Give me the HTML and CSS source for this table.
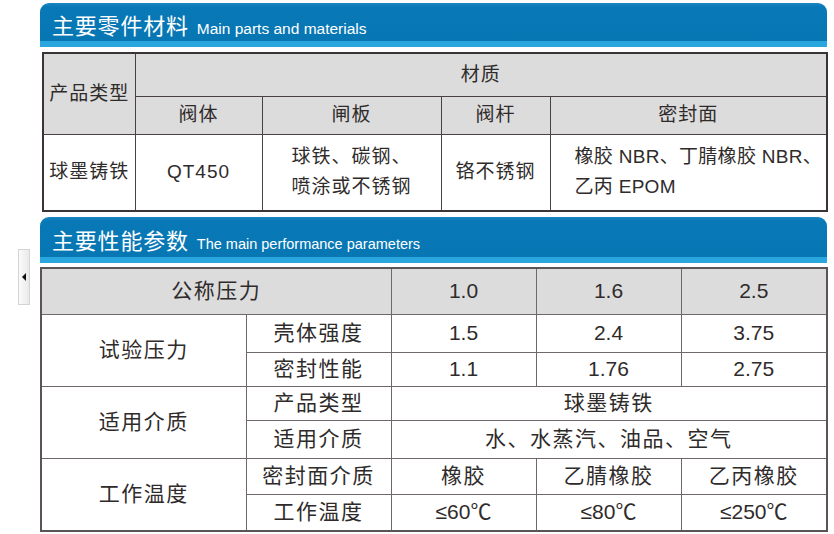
FILE: index.html
```html
<!DOCTYPE html>
<html lang="zh">
<head>
<meta charset="utf-8">
<link rel="stylesheet" href="styles.css">
</head>
<body>
<div class="side-tab"><span class="tri"></span></div>
<div class="page">
  <div class="bar">
    <span class="bar-cn">主要零件材料</span>
    <span class="bar-en">Main parts and materials</span>
  </div>
  <table class="t1">
    <colgroup>
      <col class="c1a"><col class="c1b"><col class="c1c"><col class="c1d"><col class="c1e">
    </colgroup>
    <tr class="r1a">
      <th rowspan="2" class="gray">产品类型</th>
      <th colspan="4" class="gray">材质</th>
    </tr>
    <tr class="r1b">
      <th class="gray">阀体</th>
      <th class="gray">闸板</th>
      <th class="gray">阀杆</th>
      <th class="gray">密封面</th>
    </tr>
    <tr class="r1c">
      <td>球墨铸铁</td>
      <td class="lat">QT450</td>
      <td class="two">球铁、碳钢、<br>喷涂或不锈钢</td>
      <td>铬不锈钢</td>
      <td class="two left">橡胶 NBR、丁腈橡胶 NBR、<br>乙丙 EPOM</td>
    </tr>
  </table>

  <div class="bar bar2">
    <span class="bar-cn">主要性能参数</span>
    <span class="bar-en">The main performance parameters</span>
  </div>
  <table class="t2">
    <colgroup>
      <col class="c2a"><col class="c2b"><col class="c2c"><col class="c2d"><col class="c2e">
    </colgroup>
    <tr class="h46">
      <th colspan="2" class="gray">公称压力</th>
      <th class="gray num">1.0</th>
      <th class="gray num">1.6</th>
      <th class="gray num">2.5</th>
    </tr>
    <tr class="h38">
      <td rowspan="2" class="grp">试验压力</td>
      <td>壳体强度</td>
      <td class="num">1.5</td>
      <td class="num">2.4</td>
      <td class="num">3.75</td>
    </tr>
    <tr class="h34">
      <td>密封性能</td>
      <td class="num">1.1</td>
      <td class="num">1.76</td>
      <td class="num">2.75</td>
    </tr>
    <tr class="h34 top-strong">
      <td rowspan="2" class="grp">适用介质</td>
      <td>产品类型</td>
      <td colspan="3">球墨铸铁</td>
    </tr>
    <tr class="h38">
      <td>适用介质</td>
      <td colspan="3">水、水蒸汽、油品、空气</td>
    </tr>
    <tr class="h36 top-strong">
      <td rowspan="2" class="grp">工作温度</td>
      <td>密封面介质</td>
      <td>橡胶</td>
      <td>乙腈橡胶</td>
      <td>乙丙橡胶</td>
    </tr>
    <tr class="h37">
      <td>工作温度</td>
      <td class="num">≤60℃</td>
      <td class="num">≤80℃</td>
      <td class="num">≤250℃</td>
    </tr>
  </table>
</div>
</body>
</html>
```

FILE: styles.css
```css
html, body {
  margin: 0;
  padding: 0;
  background: #ffffff;
}
body {
  font-family: "Liberation Sans", "Noto Sans CJK SC", sans-serif;
  color: #2f2b2b;
  width: 834px;
  height: 534px;
  overflow: hidden;
  position: relative;
}
.page {
  padding: 3px 0 0 40px;
  width: 787px;
}
.bar {
  height: 38px;
  border-radius: 9px 9px 0 0;
  background: linear-gradient(#1a86c2 0, #0878b6 4px, #0777b4 100%);
  border-bottom: 6px solid #2aa6df;
  display: flex;
  align-items: baseline;
  padding-left: 12px;
  color: #ffffff;
  box-sizing: border-box;
  height: 44px;
  padding-top: 8px;
}
.bar-cn {
  font-family: "Noto Sans CJK SC", sans-serif;
  font-size: 22px;
  letter-spacing: 0.8px;
  line-height: 26px;
}
.bar-en {
  font-family: "Liberation Sans", Arial, sans-serif;
  font-size: 15.5px;
  margin-left: 8px;
}
.bar2 {
  margin-top: 5px;
  height: 46px;
  padding-top: 9px;
}
.bar2 .bar-en {
  font-size: 14.5px;
}
table {
  border-collapse: collapse;
  table-layout: fixed;
}
th, td {
  padding: 0;
  text-align: center;
  vertical-align: middle;
  font-weight: normal;
  white-space: nowrap;
}
.t1 {
  margin: 5px 0 0 2px;
  width: 784px;
  border: 2px solid #3b3434;
}
.t1 th, .t1 td {
  border: 1px solid #4a4242;
  font-size: 19px;
  line-height: 24px;
  letter-spacing: 1px;
}
.t1 .c1a { width: 92px; }
.t1 .c1b { width: 127px; }
.t1 .c1c { width: 179px; }
.t1 .c1d { width: 109px; }
.t1 .c1e { width: 277px; }
.t1 .r1a { height: 43px; }
.t1 .r1b { height: 38px; }
.t1 .r1c { height: 77px; }
.t1 .r1c td { border-bottom: 2px solid #3b3434; }
.gray { background: #dcdcdc; }
.lat, .num {
  letter-spacing: 0;
}
.t1 .lat { font-size: 19px; }
.t1 .two { line-height: 30px; }
.t1 .left {
  text-align: left;
  padding-left: 24px;
  letter-spacing: 0.3px;
}
.t2 {
  margin-top: 4px;
  width: 786px;
  border: 2px solid #5a5454;
}
.t2 th, .t2 td {
  border: 1px solid #6e6868;
  font-size: 21px;
  line-height: 24px;
  letter-spacing: 1.5px;
}
.t2 .num {
  font-size: 21px;
  letter-spacing: 0;
}
.t2 .c2a { width: 205px; }
.t2 .c2b { width: 145px; }
.t2 .c2c { width: 145px; }
.t2 .c2d { width: 145px; }
.t2 .c2e { width: 146px; }
.t2 .h46 { height: 46px; }
.t2 .h38 { height: 38px; }
.t2 .h34 { height: 34px; }
.t2 .h36 { height: 36px; }
.t2 .h37 { height: 37px; }
.t2 .top-strong td { border-top: 1px solid #1e1a1a; }
.side-tab {
  position: absolute;
  left: 18px;
  top: 249px;
  width: 10px;
  height: 54px;
  border: 1px solid #d4d4d4;
  background: linear-gradient(90deg, #fbfbfb, #e9e9e9);
  display: flex;
  align-items: center;
  justify-content: center;
}
.tri {
  width: 0;
  height: 0;
  border-top: 4px solid transparent;
  border-bottom: 4px solid transparent;
  border-right: 4px solid #111;
}
```
